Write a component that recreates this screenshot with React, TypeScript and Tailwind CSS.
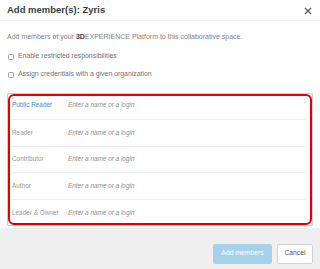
const roles = ['Public Reader', 'Reader', 'Contributor', 'Author', 'Leader & Owner']

const rowStyles = [
    'h-[24px] pb-[10px] border-b',
    'h-[27px] pb-[9px] border-b',
    'h-[26px] pb-[9px] border-b',
    'h-[27px] pb-[9px] border-b',
    'h-[22px] pb-[5px]',
]

function App() {
    return (
        <div className="flex h-[269px] w-[320px] flex-col bg-white font-['Liberation_Sans',Arial,sans-serif] overflow-hidden">
            {/* Header */}
            <div className="flex h-[21px] shrink-0 items-center justify-between border-b border-[#efefef] pl-[7px] pr-[8px]">
                <span className="text-[9.5px] font-bold text-[#3b3b3b]">Add member(s): Zyris</span>
                <svg width="8" height="8" viewBox="0 0 8 8" className="mt-[1px]">
                    <path d="M1 1 L7 7 M7 1 L1 7" stroke="#555" strokeWidth="1.1" fill="none" />
                </svg>
            </div>

            {/* Body */}
            <div className="flex flex-col px-[7px]">
                <p className="mt-[11px] text-[7px] leading-[9px] text-[#808285]">
                    Add members of your <span className="font-bold text-[#3b3b3b]">3D</span>EXPERIENCE Platform to this collaborative space.
                </p>

                <label className="mt-[11px] flex h-[9px] items-center gap-[4px] text-[6.9px] text-[#707275]">
                    <span className="ml-[1px] h-[6px] w-[6px] rounded-[1.5px] border border-[#a0a0a0] bg-white" />
                    Enable restricted responsibilities
                </label>
                <label className="mt-[9px] flex h-[9px] items-center gap-[4px] text-[6.9px] text-[#707275]">
                    <span className="ml-[1px] h-[6px] w-[6px] rounded-[1.5px] border border-[#a0a0a0] bg-white" />
                    Assign credentials with a given organization
                </label>

                {/* Roles box */}
                <div className="mt-[13.5px] h-[133px] rounded-[1px] border border-[#c5d3dc]">
                    <div className="flex h-[131px] flex-col rounded-[6px] border-2 border-[#e50000] pl-[2px] pr-[5px]">
                        {roles.map((role, i) => (
                            <div key={role} className={`flex shrink-0 items-end border-[#ececec] ${rowStyles[i]}`}>
                                <span className={`w-[56px] text-[6.4px] leading-[8px] ${i === 0 ? 'text-[#3a8fc7]' : 'text-[#9a9a9a]'}`}>
                                    {role}
                                </span>
                                <span className="text-[6.4px] italic leading-[8px] text-[#8f8f8f]">Enter a name or a login</span>
                            </div>
                        ))}
                    </div>
                </div>
            </div>

            {/* Footer */}
            <div className="mt-[2px] flex flex-1 items-start justify-end gap-[5px] bg-[#efefef] pr-[7px] pt-[16px]">
                <button className="h-[20px] w-[59px] rounded-[2px] bg-[#a6d1eb] text-[6.8px] text-white">Add members</button>
                <button className="h-[20px] w-[36px] rounded-[2px] border border-[#d2d2d2] bg-white text-[6.8px] text-[#555]">Cancel</button>
            </div>
        </div>
    )
}

export default App
